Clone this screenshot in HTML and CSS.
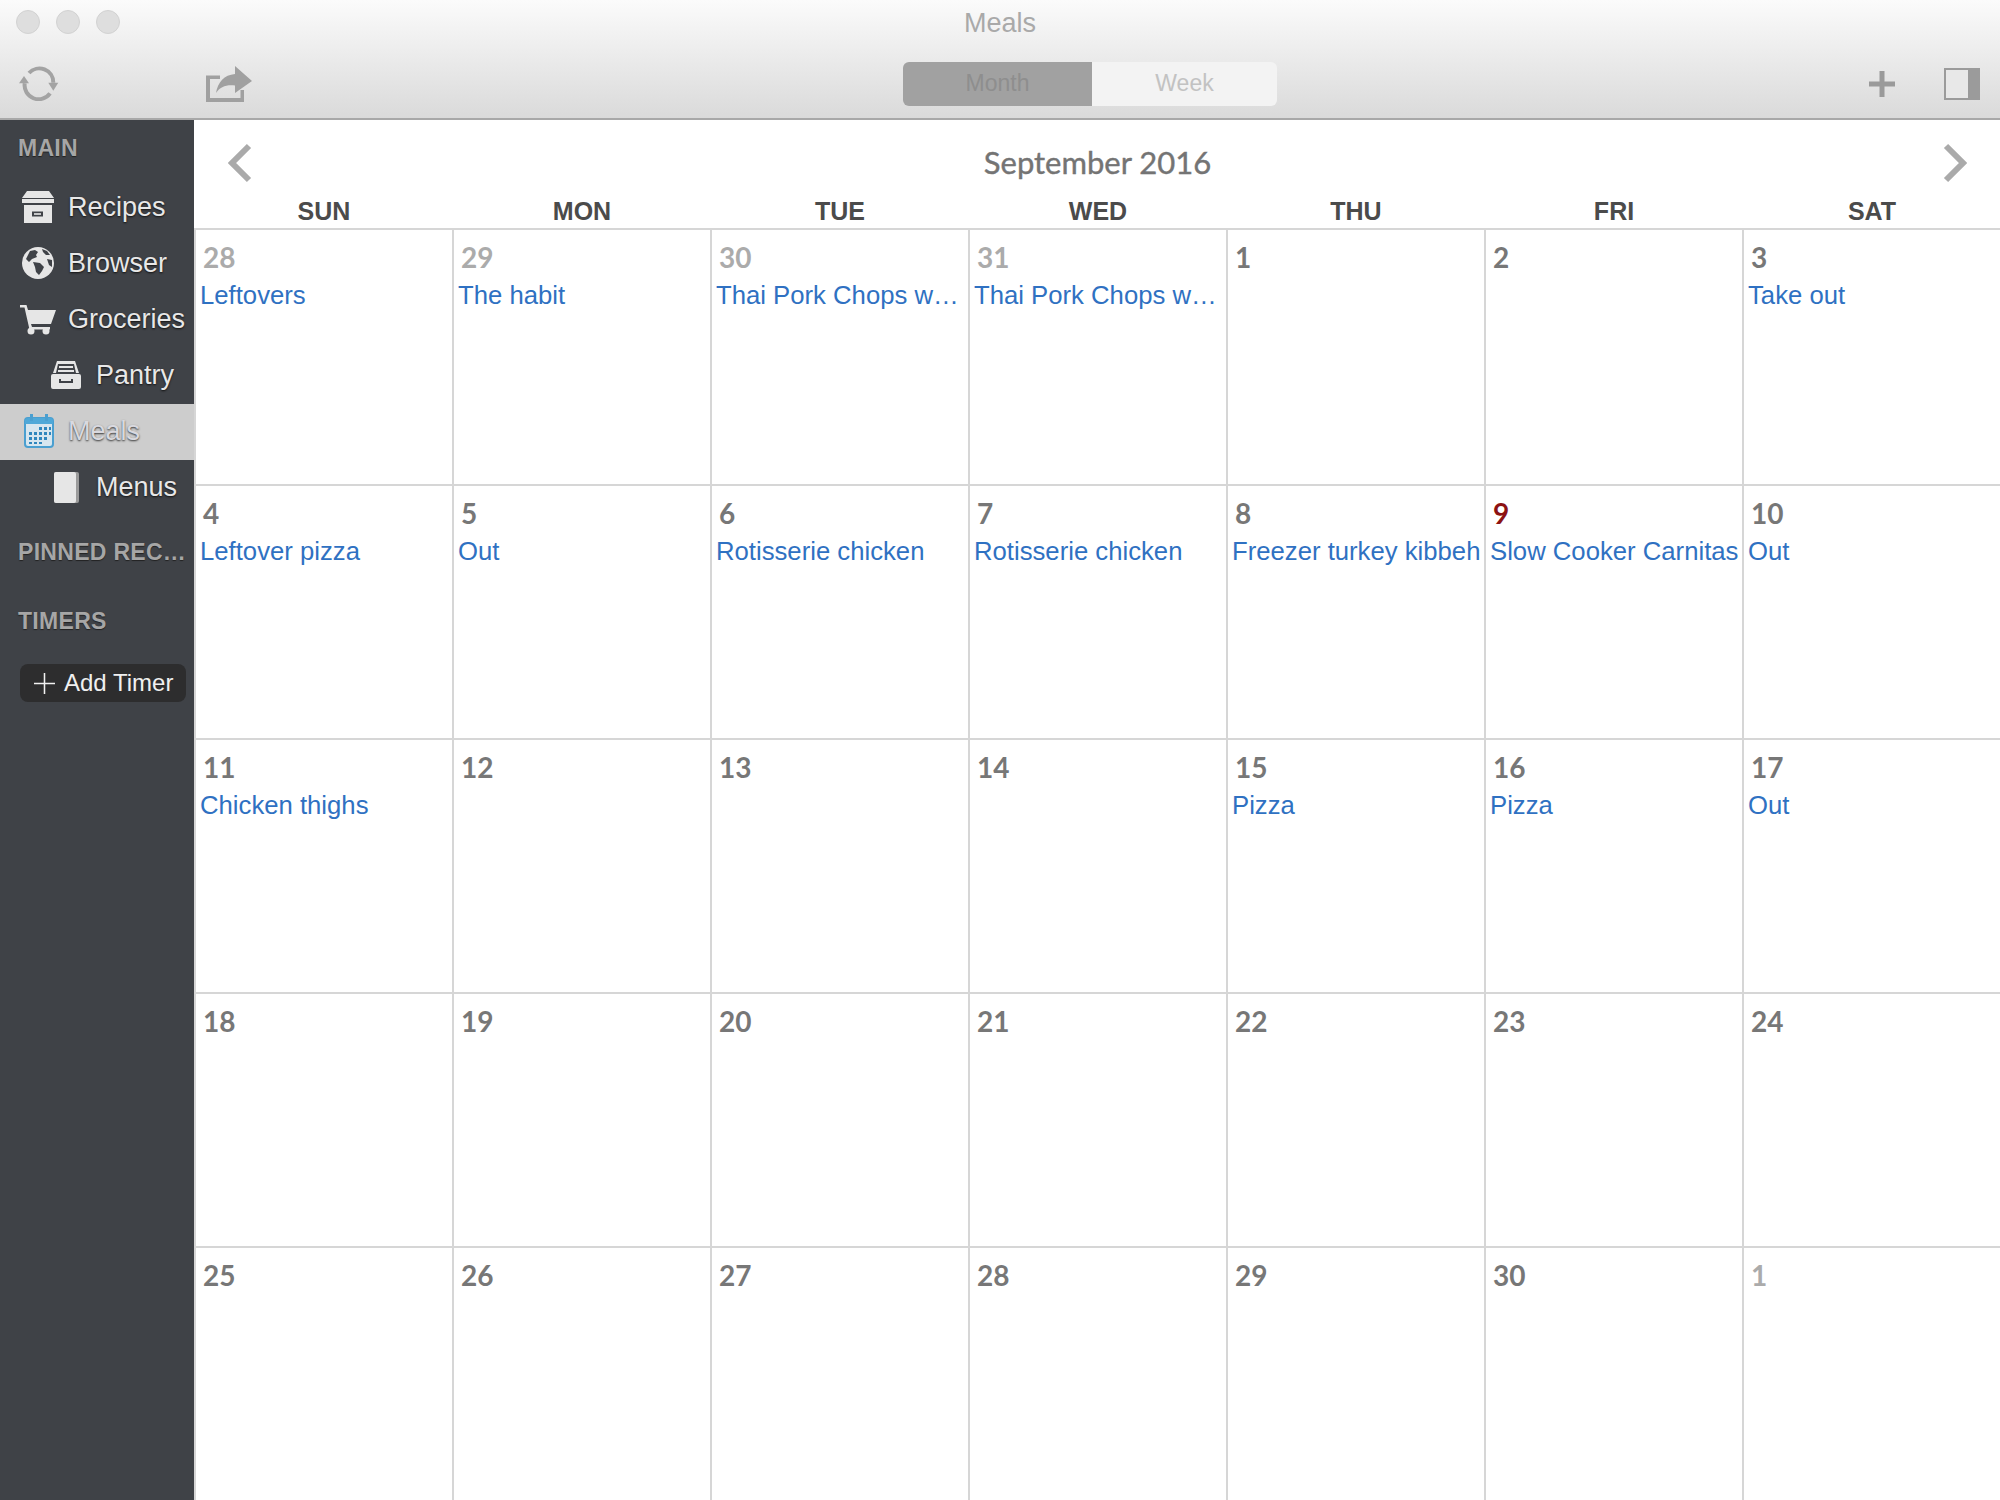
FILE: index.html
```html
<!DOCTYPE html>
<html lang="en">
<head>
<meta charset="utf-8">
<title>Meals</title>
<link rel="stylesheet" href="styles.css">
</head>
<body>
<div class="window">
  <header class="chrome">
    <div class="titlebar">
      <div class="lights"><span class="light"></span><span class="light"></span><span class="light"></span></div>
      <div class="title">Meals</div>
    </div>
    <div class="toolbar">
      <div class="tb-left">
        <svg class="ic-sync" viewBox="0 0 40 36"><path d="M10 8 A14 14 0 0 1 34.300 17.700" fill="none" stroke="#a3a3a3" stroke-width="4"/><path d="M31 28.300 A14 14 0 0 1 5.700 18.300" fill="none" stroke="#a3a3a3" stroke-width="4"/><path d="M29.300 17.700 H39.300 L34.300 25.700 Z" fill="#a3a3a3"/><path d="M0 18.300 H10 L5 11 Z" fill="#a3a3a3"/></svg>
        <svg class="ic-share" viewBox="0 0 46 36"><path d="M14 9.500 H0 V36 H38 V24 H34.500 V32 H4 V13 H14 Z" fill="#a0a0a0"/><path d="M29 0 L46 15 L29 27 V19.500 C20 18.500 14 21 10 27 C12 16 18 9 29 8 Z" fill="#a0a0a0"/></svg>
      </div>
      <div class="segments"><div class="seg seg-on">Month</div><div class="seg seg-off">Week</div></div>
      <div class="tb-right">
        <svg class="ic-plus" viewBox="0 0 26 26"><path d="M13 0 V26 M0 13 H26" stroke="#9a9a9a" stroke-width="5"/></svg>
        <svg class="ic-panel" viewBox="0 0 36 32"><rect x="1" y="1" width="34" height="30" fill="#e8e8e8" stroke="#9b9b9b" stroke-width="2"/><rect x="24" y="0" width="12" height="32" fill="#9b9b9b"/></svg>
      </div>
    </div>
  </header>
  <div class="body">
    <nav class="sidebar">
      <div class="sec sec-main">MAIN</div>
      <div class="item">
        <svg class="ic" viewBox="0 0 32 32"><path d="M5 0 H27 L32 7 H0 Z M0 8 H32 V12 H0 Z" fill="#e6e6e6"/><path d="M2 14 H30 V32 H2 Z M10 20.500 V25.500 H21 V20.500 Z" fill="#e6e6e6" fill-rule="evenodd"/><rect x="12" y="22.200" width="7" height="1.600" fill="#e6e6e6"/></svg>
        <span>Recipes</span>
      </div>
      <div class="item">
        <svg class="ic" viewBox="0 0 32 32"><circle cx="16" cy="16" r="16" fill="#e6e6e6"/><path d="M8 4 L13 3 L16 5 L14 8 L15 10 L10 12 L7 15 L4 12 Z M20 2 L25 4 L28 8 L24 8 L21 5 Z M11 15 L18 16 L22 20 L20 24 L17 28 L14 25 L13 20 Z M25 12 L30 13 L30 20 L27 18 Z" fill="#3f4247"/></svg>
        <span>Browser</span>
      </div>
      <div class="item">
        <svg class="ic ic-cart" viewBox="0 0 36 32"><path d="M0 2 H6.500 L8 7 H36 L31 21 H11 L12 24 H30 V26.500 H9.500 L4.500 4.500 H0 Z" fill="#e6e6e6"/><circle cx="11" cy="28" r="3.500" fill="#e6e6e6"/><circle cx="26" cy="28" r="3.500" fill="#e6e6e6"/></svg>
        <span>Groceries</span>
      </div>
      <div class="item item-sub">
        <svg class="ic ic-drawer" viewBox="0 0 30 28"><path d="M6 0 H24 L28 12 H25 L23 3 H7 L5 12 H2 Z M8 5 H22 V7 H8 Z M7 9 H23 V11 H7 Z" fill="#e6e6e6"/><path d="M2 13 H28 Q30 13 30 15 V26 Q30 28 28 28 H2 Q0 28 0 26 V15 Q0 13 2 13 Z M8 18 V22 H22 V18 H20 V20 H10 V18 Z" fill="#e6e6e6" fill-rule="evenodd"/></svg>
        <span>Pantry</span>
      </div>
      <div class="item item-on">
        <svg class="ic ic-cal" viewBox="0 0 30 34"><rect x="1" y="4" width="28" height="29" rx="3" fill="#d7e6ef" stroke="#4a9fd0" stroke-width="2"/><path d="M1 7 Q1 4 4 4 H26 Q29 4 29 7 V10 H1 Z" fill="#4fa8d8"/><rect x="6" y="0" width="3" height="7" fill="#4a9fd0"/><rect x="21" y="0" width="3" height="7" fill="#4a9fd0"/><path d="M15 13 h3 v3 h-3 z M20 13 h3 v3 h-3 z M25 13 h2 v3 h-2 z M5 18 h3 v3 h-3 z M10 18 h3 v3 h-3 z M15 18 h3 v3 h-3 z M20 18 h3 v3 h-3 z M25 18 h2 v3 h-2 z M5 23 h3 v3 h-3 z M10 23 h3 v3 h-3 z M15 23 h3 v3 h-3 z M20 23 h3 v3 h-3 z M5 28 h3 v2 h-3 z M10 28 h3 v2 h-3 z M15 28 h3 v2 h-3 z" fill="#2f86bd"/></svg>
        <span>Meals</span>
      </div>
      <div class="item item-sub">
        <svg class="ic ic-book" viewBox="0 0 25 31"><rect x="0" y="0" width="25" height="31" rx="2" fill="#9a9a9a"/><rect x="0" y="0" width="22" height="31" rx="2" fill="#e6e6e6"/></svg>
        <span>Menus</span>
      </div>
      <div class="sec sec-pinned">PINNED REC…</div>
      <div class="sec sec-timers">TIMERS</div>
      <div class="add-timer">
        <svg class="ic-add" viewBox="0 0 22 22"><path d="M11 0 V22 M0 11 H22" stroke="#f2f2f2" stroke-width="1.600"/></svg>
        <span>Add Timer</span>
      </div>
    </nav>
    <main class="calendar">
      <div class="monthbar">
        <svg class="chev" viewBox="0 0 24 40"><path d="M21 3 L4 20 L21 37" fill="none" stroke="#aaaaaa" stroke-width="6"/></svg>
        <h1 class="month">September 2016</h1>
        <svg class="chev" viewBox="0 0 24 40"><path d="M3 3 L20 20 L3 37" fill="none" stroke="#aaaaaa" stroke-width="6"/></svg>
      </div>
      <div class="dows"><div>SUN</div><div>MON</div><div>TUE</div><div>WED</div><div>THU</div><div>FRI</div><div>SAT</div></div>
      <div class="grid">
        <div class="cell"><div class="num dim">28</div><div class="ev">Leftovers</div></div>
        <div class="cell"><div class="num dim">29</div><div class="ev">The habit</div></div>
        <div class="cell"><div class="num dim">30</div><div class="ev">Thai Pork Chops w…</div></div>
        <div class="cell"><div class="num dim">31</div><div class="ev">Thai Pork Chops w…</div></div>
        <div class="cell"><div class="num">1</div></div>
        <div class="cell"><div class="num">2</div></div>
        <div class="cell"><div class="num">3</div><div class="ev">Take out</div></div>

        <div class="cell"><div class="num">4</div><div class="ev">Leftover pizza</div></div>
        <div class="cell"><div class="num">5</div><div class="ev">Out</div></div>
        <div class="cell"><div class="num">6</div><div class="ev">Rotisserie chicken</div></div>
        <div class="cell"><div class="num">7</div><div class="ev">Rotisserie chicken</div></div>
        <div class="cell"><div class="num">8</div><div class="ev">Freezer turkey kibbeh</div></div>
        <div class="cell"><div class="num today">9</div><div class="ev">Slow Cooker Carnitas</div></div>
        <div class="cell"><div class="num">10</div><div class="ev">Out</div></div>

        <div class="cell"><div class="num">11</div><div class="ev">Chicken thighs</div></div>
        <div class="cell"><div class="num">12</div></div>
        <div class="cell"><div class="num">13</div></div>
        <div class="cell"><div class="num">14</div></div>
        <div class="cell"><div class="num">15</div><div class="ev">Pizza</div></div>
        <div class="cell"><div class="num">16</div><div class="ev">Pizza</div></div>
        <div class="cell"><div class="num">17</div><div class="ev">Out</div></div>

        <div class="cell"><div class="num">18</div></div>
        <div class="cell"><div class="num">19</div></div>
        <div class="cell"><div class="num">20</div></div>
        <div class="cell"><div class="num">21</div></div>
        <div class="cell"><div class="num">22</div></div>
        <div class="cell"><div class="num">23</div></div>
        <div class="cell"><div class="num">24</div></div>

        <div class="cell"><div class="num">25</div></div>
        <div class="cell"><div class="num">26</div></div>
        <div class="cell"><div class="num">27</div></div>
        <div class="cell"><div class="num">28</div></div>
        <div class="cell"><div class="num">29</div></div>
        <div class="cell"><div class="num">30</div></div>
        <div class="cell"><div class="num dim">1</div></div>
      </div>
    </main>
  </div>
</div>
</body>
</html>
```
FILE: styles.css
```css
* { box-sizing: border-box; }
html, body { margin: 0; padding: 0; height: 100%; overflow: hidden; background: #fff; }
body { font-family: "Liberation Sans", Arial, sans-serif; }
.window { width: 2000px; height: 1500px; display: flex; flex-direction: column; }

.chrome { height: 120px; flex: none; background: linear-gradient(#fbfbfb, #dadada); border-bottom: 2px solid #a8a8a8; }
.titlebar { height: 45px; position: relative; display: flex; align-items: center; justify-content: center; padding-top: 2px; }
.lights { position: absolute; left: 16px; top: 10px; display: flex; gap: 16px; }
.light { width: 24px; height: 24px; border-radius: 50%; background: #dedede; border: 1px solid #d2d2d2; }
.title { font-size: 27px; color: #a9a9a9; }
.toolbar { height: 73px; display: grid; grid-template-columns: 903px 374px 1fr; padding-top: 17px; align-items: start; }
.tb-left { display: flex; align-items: center; padding-left: 19px; height: 44px; }
.ic-sync { width: 40px; height: 36px; margin-top: -2px; }
.ic-share { width: 46px; height: 36px; margin-left: 147px; }
.segments { display: flex; height: 44px; border-radius: 6px; overflow: hidden; font-size: 23px; }
.seg { display: flex; align-items: center; justify-content: center; padding-bottom: 2px; }
.seg-on { width: 189px; background: #a1a1a1; color: #8e8e8e; }
.seg-off { flex: 1; background: #f3f3f3; color: #c2c2c2; }
.tb-right { display: flex; align-items: center; justify-content: flex-end; height: 44px; padding-right: 20px; }
.ic-plus { width: 26px; height: 26px; margin-right: 49px; }
.ic-panel { width: 36px; height: 32px; }

.body { flex: 1; display: flex; min-height: 0; }
.sidebar { width: 194px; flex: none; background: #3f4247; padding-top: 13px; color: #e8e8e8; }
.sec { font-size: 23px; font-weight: 700; color: #a6a6a6; padding-left: 18px; letter-spacing: 0.3px; line-height: 30px; white-space: nowrap; text-shadow: 0 1px 1px #222; }
.sec-main { margin-bottom: 17px; }
.sec-pinned { margin-top: 21px; }
.sec-timers { margin-top: 39px; }
.item { height: 56px; display: flex; align-items: center; padding: 0 0 2px 22px; font-size: 27px; text-shadow: 0 1px 2px #111; }
.item span { margin-left: 14px; }
.ic { width: 32px; height: 32px; flex: none; }
.ic-cart { width: 36px; height: 32px; margin-left: -2px; }
.ic-cart + span { margin-left: 12px; }
.item-sub { padding-left: 51px; }
.ic-drawer { width: 30px; height: 28px; }
.ic-drawer + span { margin-left: 15px; }
.ic-book { width: 25px; height: 31px; margin-left: 3px; }
.ic-book + span { margin-left: 17px; }
.item-on { background: #cdcdcd; color: #d9d9df; text-shadow: 0 1px 2px #333; padding-left: 24px; }
.ic-cal { width: 30px; height: 34px; }
.ic-cal + span { margin-left: 14px; }
.add-timer { margin: 28px 0 0 20px; width: 166px; height: 38px; border-radius: 8px; background: #2d2d2e; display: flex; align-items: center; padding-left: 14px; font-size: 24px; color: #f0f0f0; }
.ic-add { width: 21px; height: 21px; margin-right: 9px; }

.calendar { flex: 1; min-width: 0; display: flex; flex-direction: column; }
.monthbar { height: 68px; flex: none; display: flex; align-items: center; justify-content: space-between; padding: 17px 33px 0 34px; }
.chev { width: 24px; height: 40px; }
.month { margin: 0; font-family: Lato, sans-serif; font-size: 31px; font-weight: 400; color: #747474; -webkit-text-stroke: 0.4px #747474; line-height: 1; }
.dows { height: 40px; flex: none; display: grid; grid-template-columns: repeat(7, 258px); padding-left: 1px; font-size: 25px; font-weight: 700; color: #4b4b4b; text-align: center; line-height: 46px; }
.grid { flex: 1; display: grid; grid-template-columns: repeat(7, 258px); grid-template-rows: 256px 254px 254px 254px 1fr; }
.cell { border-top: 2px solid #d6d6d6; border-left: 2px solid #d6d6d6; min-width: 0; padding: 0 0 0 4px; overflow: hidden; }
.num { font-family: Lato, sans-serif; font-weight: 700; font-size: 28px; line-height: 34px; color: #777; margin: 10px 0 0 3px; }
.num.dim { color: #ababab; }
.num.today { color: #8c1212; }
.ev { font-size: 25.7px; line-height: 32px; margin-top: 5px; color: #2f71c2; white-space: nowrap; }
```
